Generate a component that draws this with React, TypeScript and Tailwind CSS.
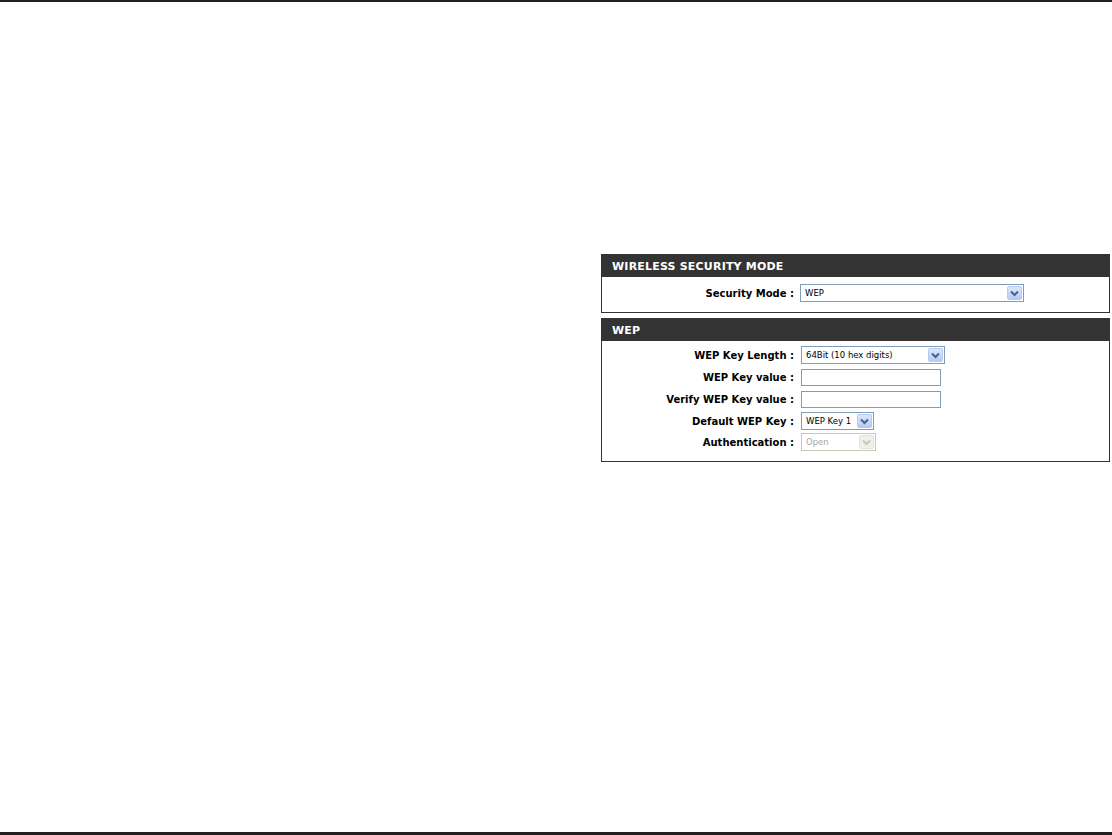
import React from "react";

const font = { fontFamily: '"DejaVu Sans", Verdana, sans-serif' };

function Arrow({ disabled }: { disabled?: boolean }) {
  return (
    <div
      className={`flex h-full w-[15px] items-center justify-center rounded-[2px] border ${
        disabled
          ? "border-[#e4e2da] bg-[#f0efe8]"
          : "border-[#b6c9f4] bg-gradient-to-b from-[#dde7fd] to-[#b5cbf7]"
      }`}
    >
      <svg width="9" height="7" viewBox="0 0 9 7">
        <path
          d="M1 1.5 L4.5 5 L8 1.5"
          fill="none"
          stroke={disabled ? "#c9c7ba" : "#4d6185"}
          strokeWidth="2"
        />
      </svg>
    </div>
  );
}

function Select({
  w,
  text,
  disabled,
}: {
  w: string;
  text: string;
  disabled?: boolean;
}) {
  return (
    <div
      className={`flex h-[18px] items-stretch border p-px ${w} ${
        disabled ? "border-[#c9c7ba] bg-white" : "border-[#7f9db9] bg-white"
      }`}
    >
      <div
        className={`flex flex-1 items-center pl-[3px] text-[8.5px] leading-none ${
          disabled ? "text-[#aca899]" : "text-black"
        }`}
        style={font}
      >
        {text}
      </div>
      <Arrow disabled={disabled} />
    </div>
  );
}

function Input() {
  return <div className="h-[17px] w-[140px] border border-[#7f9db9] bg-white" />;
}

function Row({ label, children, h = "h-[22px]" }: { label: string; children: React.ReactNode; h?: string }) {
  return (
    <div className={`flex items-center ${h}`}>
      <div
        className="w-[193px] shrink-0 pr-[6px] text-right text-[10px] font-bold text-black"
        style={font}
      >
        {label}
      </div>
      {children}
    </div>
  );
}

function Header({ title }: { title: string }) {
  return (
    <div
      className="flex h-[23px] items-center bg-[#333333] pl-[11px] pt-[3px] text-[11px] font-bold tracking-[0.2px] text-white"
      style={font}
    >
      {title}
    </div>
  );
}

export default function App() {
  return (
    <div className="flex h-[835px] w-[1112px] flex-col bg-white">
      <div className="h-[2px] w-full bg-[#231f20]" />
      <div className="flex flex-1 flex-col pl-[601px] pt-[252px]">
        <div className="w-[509px]">
          <Header title="WIRELESS SECURITY MODE" />
          <div className="border border-t-0 border-[#333333] pb-[9px] pt-[6px] pl-[5px]">
            <Row label="Security Mode :" h="h-[20px]">
              <Select w="w-[224px]" text="WEP" />
            </Row>
          </div>
        </div>
        <div className="mt-[5px] w-[509px]">
          <Header title="WEP" />
          <div className="border border-t-0 border-[#333333] pb-[9px] pt-[3px] pl-[5px]">
            <Row label="WEP Key Length :">
              <div className="pl-px">
                <Select w="w-[144px]" text="64Bit (10 hex digits)" />
              </div>
            </Row>
            <Row label="WEP Key value :">
              <div className="pl-px">
                <Input />
              </div>
            </Row>
            <Row label="Verify WEP Key value :">
              <div className="pl-px">
                <Input />
              </div>
            </Row>
            <Row label="Default WEP Key :">
              <div className="pl-px">
                <Select w="w-[73px]" text="WEP Key 1" />
              </div>
            </Row>
            <Row label="Authentication :" h="h-[20px]">
              <div className="pl-px">
                <Select w="w-[75px]" text="Open" disabled />
              </div>
            </Row>
          </div>
        </div>
        <div className="flex-1" />
      </div>
      <div className="h-[3px] w-full bg-[#231f20]" />
    </div>
  );
}
